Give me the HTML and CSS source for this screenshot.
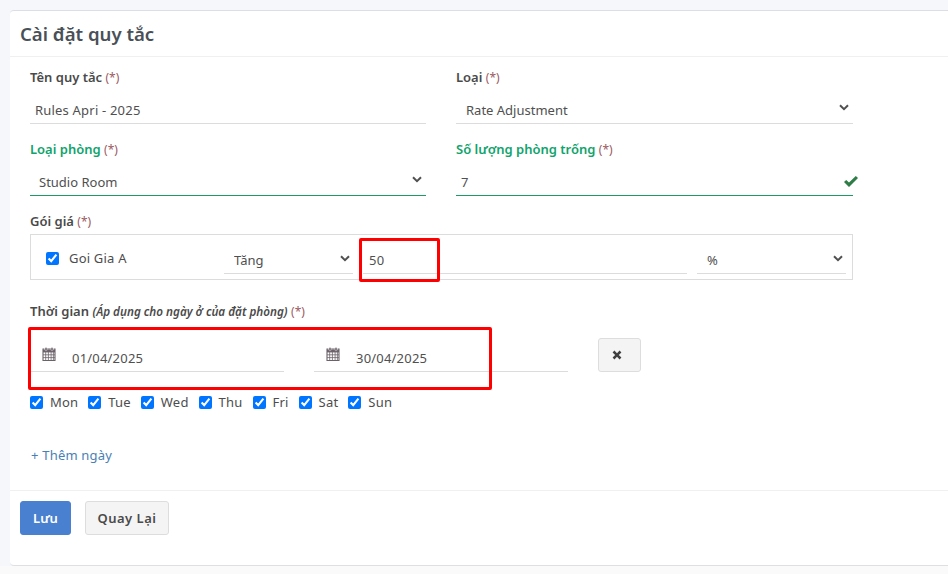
FILE: index.html
```html
<!DOCTYPE html>
<html lang="vi">
<head>
<meta charset="utf-8">
<title>Cài đặt quy tắc</title>
<link rel="stylesheet" href="styles.css">
</head>
<body>
<main class="card">
  <header class="card-head"><h1>Cài đặt quy tắc</h1></header>
  <form class="card-body">
    <div class="grid">
      <div class="field">
        <label>Tên quy tắc <span class="req">(*)</span></label>
        <input class="ctl" type="text" value="Rules Apri - 2025">
      </div>
      <div class="field">
        <label>Loại <span class="req">(*)</span></label>
        <select class="ctl sel rate"><option>Rate Adjustment</option></select>
      </div>
      <div class="field ok">
        <label>Loại phòng <span class="req">(*)</span></label>
        <select class="ctl sel"><option>Studio Room</option></select>
      </div>
      <div class="field ok">
        <label>Số lượng phòng trống <span class="req">(*)</span></label>
        <div class="valid-wrap">
          <input class="ctl num" type="text" value="7">
          <svg class="tick" viewBox="0 0 14 11"><path d="M0 6 L2.200 3.900 L5 6.600 L11.800 0 L14 2.100 L5 11 Z" fill="#2e7d46"/></svg>
        </div>
      </div>
    </div>

    <div class="field plan-field">
      <label>Gói giá <span class="req">(*)</span></label>
      <div class="plan">
        <label class="plan-name"><input type="checkbox" checked> <span>Goi Gia A</span></label>
        <select class="ctl sel mini dir"><option>Tăng</option></select>
        <input class="ctl mini amount" type="text" value="50">
        <select class="ctl sel mini unit"><option>%</option></select>
      </div>
    </div>

    <div class="field time-field">
      <label>Thời gian <em>(Áp dụng cho ngày ở của đặt phòng)</em> <span class="req">(*)</span></label>
      <div class="dates">
        <div class="date">
          <svg class="cal" viewBox="0 0 14 14"><path d="M2.500 2H1v11.500h12V2h-1.500M5 2h4" fill="none" stroke="#6b6369" stroke-width="1.100"/><path d="M1 5h12M1 7.800h12M1 10.600h12M3.700 5v8.500M6.400 5v8.500M9.100 5v8.500M11.400 5v8.500" stroke="#6b6369" stroke-width=".8"/><path d="M1 2.500h12V5H1z" fill="#6b6369"/><rect x="3" y=".5" width="2" height="3.200" rx=".8" fill="#6b6369" stroke="#fff" stroke-width=".4"/><rect x="9" y=".5" width="2" height="3.200" rx=".8" fill="#6b6369" stroke="#fff" stroke-width=".4"/></svg>
          <input class="ctl date-in" type="text" value="01/04/2025">
        </div>
        <div class="date">
          <svg class="cal" viewBox="0 0 14 14"><path d="M2.500 2H1v11.500h12V2h-1.500M5 2h4" fill="none" stroke="#6b6369" stroke-width="1.100"/><path d="M1 5h12M1 7.800h12M1 10.600h12M3.700 5v8.500M6.400 5v8.500M9.100 5v8.500M11.400 5v8.500" stroke="#6b6369" stroke-width=".8"/><path d="M1 2.500h12V5H1z" fill="#6b6369"/><rect x="3" y=".5" width="2" height="3.200" rx=".8" fill="#6b6369" stroke="#fff" stroke-width=".4"/><rect x="9" y=".5" width="2" height="3.200" rx=".8" fill="#6b6369" stroke="#fff" stroke-width=".4"/></svg>
          <input class="ctl date-in" type="text" value="30/04/2025">
        </div>
        <button class="btn remove" type="button" aria-label="Xóa">
          <svg viewBox="0 0 10 10"><path d="M2.400.6 5 3.200 7.600.6 9.400 2.400 6.800 5l2.600 2.600-1.800 1.800L5 6.800 2.400 9.400.6 7.600 3.200 5 .6 2.400Z" fill="#3f3f3f"/></svg>
        </button>
      </div>
      <div class="days">
        <label><input type="checkbox" checked> Mon</label>
        <label><input type="checkbox" checked> Tue</label>
        <label><input type="checkbox" checked> Wed</label>
        <label><input type="checkbox" checked> Thu</label>
        <label><input type="checkbox" checked> Fri</label>
        <label><input type="checkbox" checked> Sat</label>
        <label><input type="checkbox" checked> Sun</label>
      </div>
    </div>
    <a class="add" href="#">+ Thêm ngày</a>
  </form>
  <footer class="card-foot">
    <button class="btn primary" type="button">Lưu</button>
    <button class="btn back" type="button">Quay Lại</button>
  </footer>
</main>
<div class="mark mark-amount"></div>
<div class="mark mark-dates"></div>
</body>
</html>
```
FILE: styles.css
```css
* { box-sizing: border-box; }
html { height: 100%; background: #fafafa; }
body {
  margin: 0;
  height: 566px;
  padding: 10px 0 0 10px;
  background: #f5f7fb;
  font-family: "Noto Sans", "Open Sans", sans-serif;
  font-size: 13px;
  color: #4d4d4d;
  overflow: hidden;
  position: relative;
}
.card {
  width: 938px;
  height: 556px;
  background: #fff;
  border-top: 1px solid #dcdde6;
  border-bottom: 1px solid #dfdfe3;
  border-radius: 4px 0 0 4px;
  display: flex;
  flex-direction: column;
}
.card-head {
  height: 46px;
  padding: 2px 10px 0;
  border-bottom: 1px solid #f0f0f2;
  display: flex;
  align-items: center;
}
h1 {
  margin: 0;
  font-size: 18.6px;
  font-weight: 600;
  color: #495057;
  line-height: 1;
}
.card-body { padding: 10px 0 0 20px; width: 843px; flex: 1; }
.grid {
  display: grid;
  grid-template-columns: 396px 397px;
  column-gap: 30px;
  row-gap: 15px;
}
.field > label {
  display: block;
  font-weight: 600;
  line-height: 20px;
  height: 20px;
  color: #4a4a4a;
}
.req { font-size: 12px; font-weight: 400; color: #9b5a62; }
em { font-size: 11.7px; font-weight: 600; font-style: italic; }
.ctl {
  display: block;
  width: 100%;
  height: 37px;
  border: 0;
  border-bottom: 1px solid #dcdcdc;
  background: transparent;
  font: inherit;
  color: #505050;
  padding: 9px 5px 0;
  outline: 0;
  border-radius: 0;
}
input.ctl { letter-spacing: .2px; }
.sel {
  appearance: none;
  padding-left: 9px;
  padding-right: 24px;
  background: url("data:image/svg+xml,%3Csvg xmlns='http://www.w3.org/2000/svg' viewBox='0 0 10 7'%3E%3Cpath d='M1 1.300 5 5.200 9 1.300' fill='none' stroke='%23505050' stroke-width='2'/%3E%3C/svg%3E") no-repeat right 4px top 17px / 10px 7px;
}
.rate { padding-left: 10px; }
.ok > label { color: #10a36c; }
.ok .ctl { border-bottom-color: #1e9a64; }
.valid-wrap { position: relative; }
.tick { position: absolute; right: -5px; top: 17px; width: 14px; height: 11px; }
.plan-field { margin-top: 15px; }
.plan {
  margin-top: 3px;
  height: 46px;
  border: 1px solid #dcdcdc;
  display: flex;
  align-items: flex-start;
  padding-left: 15px;
}
.plan-name {
  width: 178px;
  display: flex;
  align-items: center;
  gap: 10px;
  padding-top: 14px;
  line-height: 18px;
  letter-spacing: .2px;
}
.plan-name input { margin: 0; width: 13px; height: 13px; }
.mini { height: 39px; padding-top: 12px; }
.dir { width: 129px; padding-left: 10px; background-position: right 3px top 20px; }
.amount { width: 324px; margin-left: 10px; padding-left: 6px; }
.unit { width: 149px; margin-left: 10px; padding-left: 10px; background-position: right 3px top 20px; }
.time-field { margin-top: 21px; }
.dates {
  display: flex;
  align-items: flex-start;
  padding-top: 14px;
  height: 71px;
}
.date { width: 254px; position: relative; margin-right: 30px; }
.date-in { height: 37px; padding: 9px 0 0 42px; }
.cal { position: absolute; left: 12px; top: 12px; width: 14px; height: 14px; }
.btn {
  height: 34px;
  border: 1px solid #dddddd;
  border-radius: 3px;
  background: #f4f4f4;
  color: #4a4a4a;
  font: inherit;
  font-weight: 600;
  padding: 0 12px;
}
.remove {
  width: 43px;
  margin-top: 3px;
  padding: 0 5px 0 0;
  display: flex;
  align-items: center;
  justify-content: center;
}
.remove svg { width: 10px; height: 10px; }
.days { display: flex; gap: 10px; height: 20px; align-items: center; letter-spacing: .2px; }
.days label { display: flex; align-items: center; gap: 7px; line-height: 20px; }
.days input { margin: 0; width: 13px; height: 13px; }
.add {
  display: block;
  margin-top: 33px;
  padding-left: 1px;
  line-height: 20px;
  color: #4a7fb5;
  text-decoration: none;
  letter-spacing: .2px;
}
.card-foot {
  height: 75px;
  border-top: 1px solid #f0f0f2;
  padding: 10px 10px 0;
  display: flex;
  align-items: flex-start;
  gap: 14px;
}
.primary {
  width: 51px;
  background: #4a80d0;
  border-color: #4a80d0;
  color: #fff;
  padding: 0;
}
.back { width: 84px; padding: 0; letter-spacing: .5px; }
.mark {
  position: absolute;
  border: 3px solid #ff0000;
  border-radius: 2px;
  pointer-events: none;
}
.mark-amount { left: 359px; top: 238px; width: 81px; height: 44px; }
.mark-dates { left: 28px; top: 327px; width: 464px; height: 63px; }
```
